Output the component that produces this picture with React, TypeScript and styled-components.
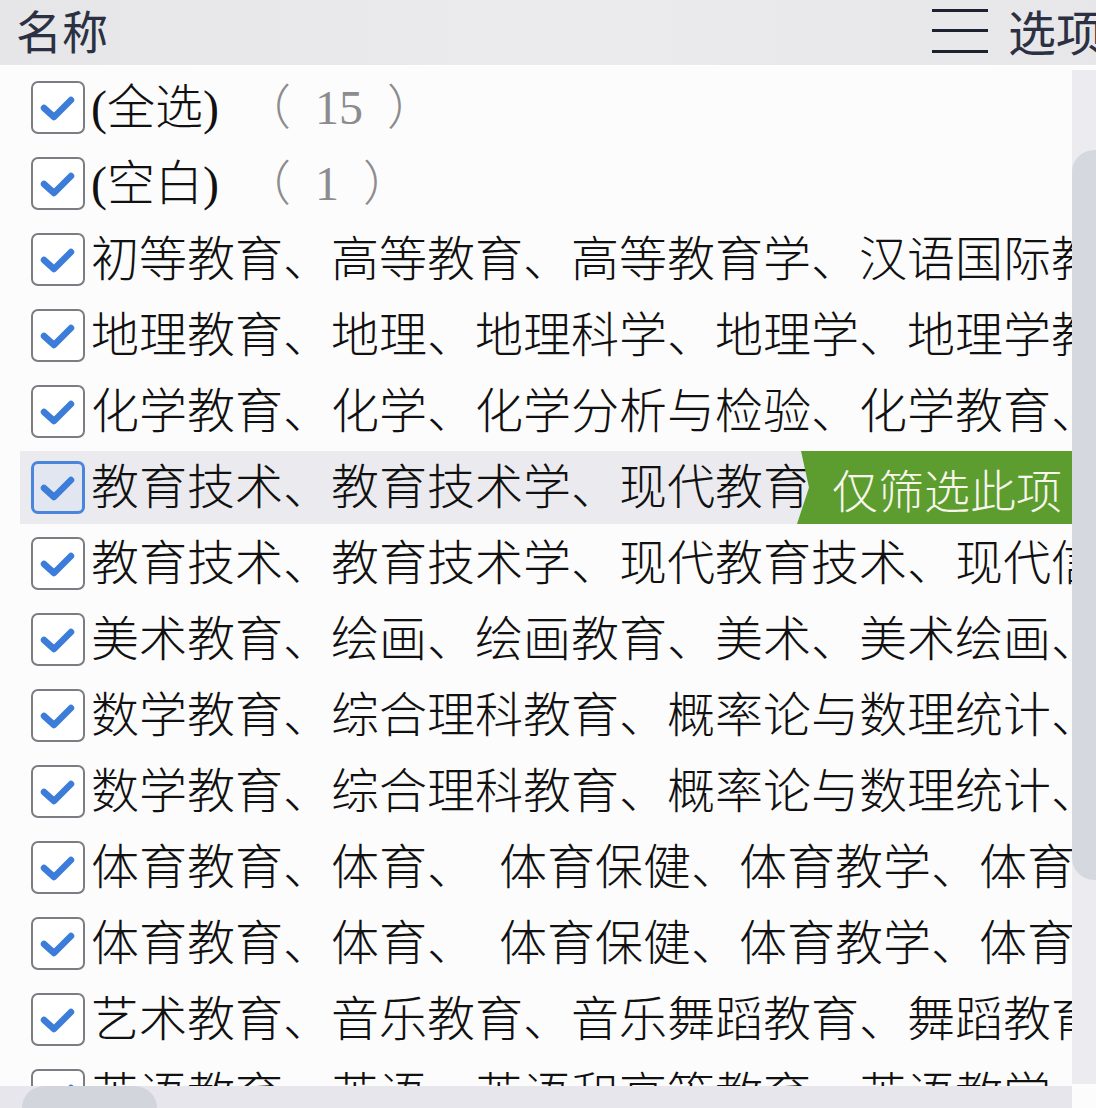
import React from 'react'
import styled, { createGlobalStyle } from 'styled-components'

const GlobalStyle = createGlobalStyle`
  html, body {
    margin: 0;
    padding: 0;
    overflow: hidden;
    background: #fdfcfd;
  }
`

const Page = styled.div`
  width: 1096px;
  height: 1108px;
  display: flex;
  flex-direction: column;
  overflow: hidden;
  background: #fdfcfd;
  font-family: 'Liberation Serif', 'Noto Sans CJK SC', serif;
`

const Header = styled.div`
  height: 66px;
  flex: none;
  display: flex;
  align-items: center;
  justify-content: space-between;
  padding-left: 16px;
  background: linear-gradient(90deg, #e6e5e8 0%, #ebeaec 50%, #e7e6e9 100%);
  border-bottom: 1px solid #ffffff;
  box-sizing: border-box;
  overflow: hidden;
`

const HeaderTitle = styled.div`
  font-family: 'Noto Sans CJK SC', sans-serif;
  font-size: 46px;
  line-height: 1;
  color: #2b3142;
  margin-top: -8px;
`

const OptionsButton = styled.div`
  display: flex;
  align-items: center;
  gap: 20px;
  margin-right: -8px;
  margin-top: -6px;
  font-family: 'Noto Sans CJK SC', sans-serif;
  font-size: 48px;
  line-height: 1;
  color: #2b3142;
  white-space: nowrap;
`

const Main = styled.div`
  flex: 1;
  display: flex;
  min-height: 0;
`

const ListColumn = styled.div`
  width: 1072px;
  flex: none;
  display: flex;
  flex-direction: column;
`

const Viewport = styled.div`
  flex: 1;
  overflow: hidden;
  display: flex;
  flex-direction: column;
  gap: 3px;
  padding-top: 5px;
  min-height: 0;
`

const Row = styled.div<{ $active?: boolean }>`
  position: relative;
  flex: none;
  height: 73px;
  margin-left: 20px;
  padding-left: 11px;
  display: flex;
  align-items: center;
  gap: 6px;
  background: ${(p) => (p.$active ? '#ebebef' : 'transparent')};
`

const Box = styled.div<{ $active?: boolean }>`
  flex: none;
  width: 54px;
  height: 53px;
  box-sizing: border-box;
  border: ${(p) => (p.$active ? '3px solid #4a85dc' : '2px solid #7c7c82')};
  border-radius: 7px;
  background: ${(p) => (p.$active ? '#e2e6f1' : '#ffffff')};
  display: flex;
  align-items: center;
  justify-content: center;
`

const Label = styled.div`
  font-size: 48px;
  font-weight: 300;
  line-height: 1;
  color: #111111;
  white-space: pre;
`

const Count = styled.span`
  color: #8c8c8e;
`

const OnlyThis = styled.div`
  position: absolute;
  right: 0;
  top: 0;
  bottom: 0;
  width: 275px;
  display: flex;
  align-items: center;
  justify-content: flex-end;
  padding-right: 10px;
  box-sizing: border-box;
  background: #5d9c2f;
  clip-path: polygon(4px 0, 100% 0, 100% 100%, 0 100%, 12px 50%);
  font-family: 'Noto Sans CJK SC', sans-serif;
  font-size: 46px;
  font-weight: 300;
  line-height: 1;
  color: #f6f6ea;
  white-space: nowrap;
`

const HBar = styled.div`
  height: 22px;
  flex: none;
  background: #e6e6ec;
  display: flex;
  padding-left: 22px;
`

const HThumb = styled.div`
  width: 135px;
  background: #d3d5dd;
  border-radius: 30px 30px 0 0;
`

const VTrack = styled.div`
  width: 24px;
  flex: none;
  margin-top: 4px;
  margin-bottom: 24px;
  background: #ebebf0;
  display: flex;
  flex-direction: column;
`

const VThumb = styled.div`
  margin-top: 80px;
  height: 730px;
  background: #d6d8e0;
  border-radius: 22px 0 0 22px;
`

const Check = () => (
  <svg width="40" height="40" viewBox="0 0 40 40">
    <polyline
      points="6,20 16,29 33,12"
      fill="none"
      stroke="#3c7dd9"
      strokeWidth="6.5"
      strokeLinecap="round"
      strokeLinejoin="round"
    />
  </svg>
)

const Menu = () => (
  <svg width="56" height="48" viewBox="0 0 56 48">
    <rect x="0" y="3" width="56" height="3" fill="#1e2230" />
    <rect x="0" y="23" width="56" height="3" fill="#1e2230" />
    <rect x="0" y="44" width="56" height="3" fill="#1e2230" />
  </svg>
)

const items: { text: string; count?: string }[] = [
  { text: '(全选)', count: '  （  15  ）' },
  { text: '(空白)', count: '  （  1  ）' },
  { text: '初等教育、高等教育、高等教育学、汉语国际教育' },
  { text: '地理教育、地理、地理科学、地理学、地理学教育' },
  { text: '化学教育、化学、化学分析与检验、化学教育、化学' },
  { text: '教育技术、教育技术学、现代教育技术、现代信息' },
  { text: '教育技术、教育技术学、现代教育技术、现代信息' },
  { text: '美术教育、绘画、绘画教育、美术、美术绘画、' },
  { text: '数学教育、综合理科教育、概率论与数理统计、' },
  { text: '数学教育、综合理科教育、概率论与数理统计、' },
  { text: '体育教育、体育、  体育保健、体育教学、体育' },
  { text: '体育教育、体育、  体育保健、体育教学、体育' },
  { text: '艺术教育、音乐教育、音乐舞蹈教育、舞蹈教育' },
  { text: '英语教育、英语、英语和高等教育、英语教学' },
]

const ACTIVE = 5

export default function App() {
  return (
    <Page>
      <GlobalStyle />
      <Header>
        <HeaderTitle>名称</HeaderTitle>
        <OptionsButton>
          <Menu />
          选项
        </OptionsButton>
      </Header>
      <Main>
        <ListColumn>
          <Viewport>
            {items.map((item, i) => (
              <Row key={i} $active={i === ACTIVE}>
                <Box $active={i === ACTIVE}>
                  <Check />
                </Box>
                <Label>
                  {item.text}
                  {item.count && <Count>{item.count}</Count>}
                </Label>
                {i === ACTIVE && <OnlyThis>仅筛选此项</OnlyThis>}
              </Row>
            ))}
          </Viewport>
          <HBar>
            <HThumb />
          </HBar>
        </ListColumn>
        <VTrack>
          <VThumb />
        </VTrack>
      </Main>
    </Page>
  )
}
